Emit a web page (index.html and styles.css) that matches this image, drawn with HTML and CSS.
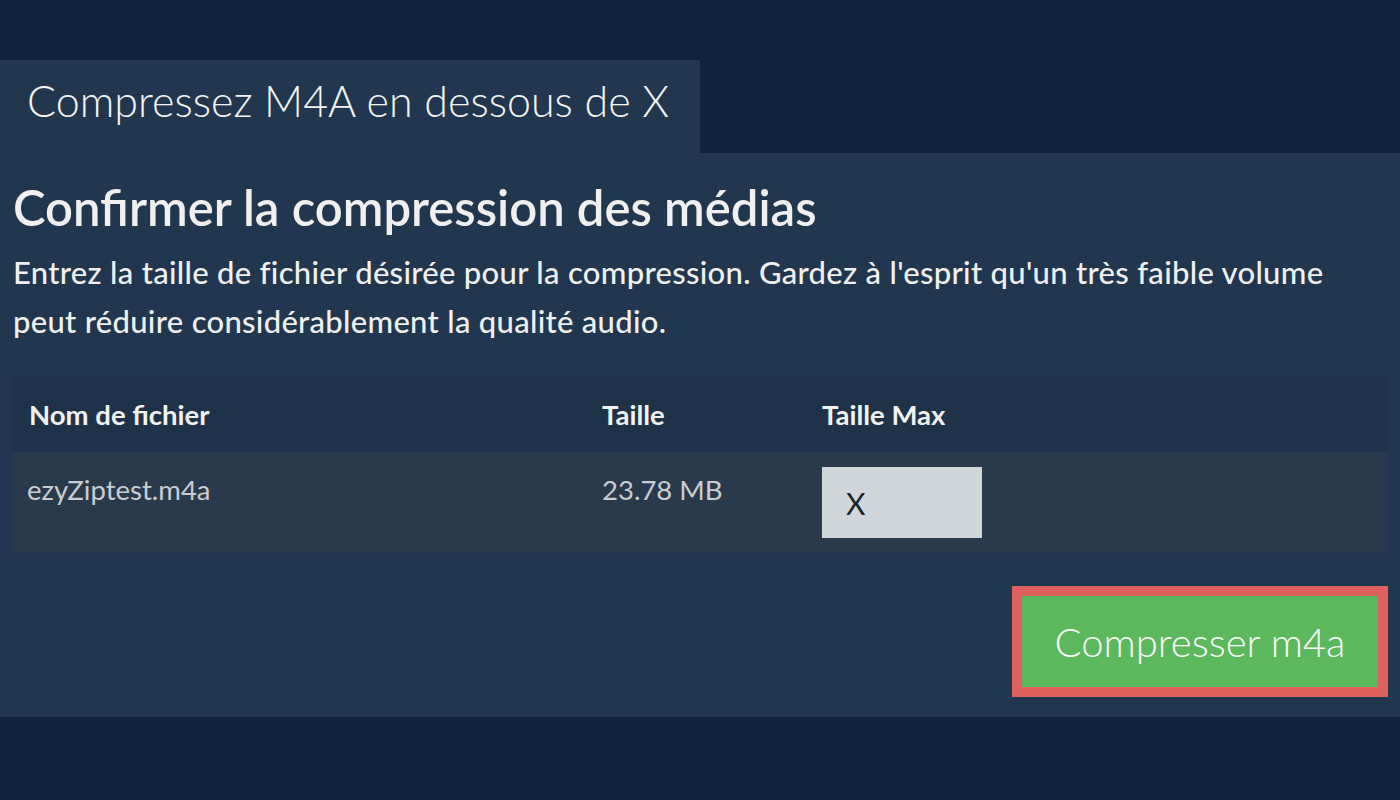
FILE: index.html
```html
<!DOCTYPE html>
<html lang="fr">
<head>
    <meta charset="UTF-8">
    <meta name="viewport" content="width=device-width, initial-scale=1.0">
    <title>Compressez M4A</title>
    <link rel="stylesheet" href="styles.css">
</head>
<body>
<div class="onglets">
    <div class="onglet">Compressez M4A en dessous de X</div>
</div>

<div class="panneau">
    <h2>Confirmer la compression des médias</h2>
    <p class="intro">Entrez la taille de fichier désirée pour la compression. Gardez à l'esprit qu'un très faible volume peut réduire considérablement la qualité audio.</p>

    <table class="fichiers">
        <thead>
            <tr>
                <th class="col-nom">Nom de fichier</th>
                <th class="col-taille">Taille</th>
                <th>Taille Max</th>
            </tr>
        </thead>
        <tbody>
            <tr>
                <td>ezyZiptest.m4a</td>
                <td>23.78 MB</td>
                <td><input type="text" class="taille-max" value="X"></td>
            </tr>
        </tbody>
    </table>

    <div class="actions">
        <button class="compresser">Compresser m4a</button>
    </div>
</div>
</body>
</html>
```

FILE: styles.css
```css
body { margin: 0; padding: 0; background: #10233a; color: #f0f0f0; font-family: Lato, "Open Sans", sans-serif; height: 800px; }
.onglets { padding-top: 60px; display: flex; }
.onglet { background: #21374f; width: 673px; height: 93px; padding-left: 27px; font-size: 43px; font-weight: 300; line-height: 82px; color: #f4f4f4; }
.panneau { background: #21374f; padding: 20px 12px 20px 12px; height: 524px; }
.panneau h2 { margin: 6px 0 0 1px; font-size: 49px; font-weight: 600; line-height: 56px; color: #f0f0f0; }
.intro { margin: 13px 0 0 1px; font-size: 31px; letter-spacing: 0.3px; line-height: 49px; font-weight: 500; color: #f0f0f0; }
.fichiers { width: 100%; border-collapse: collapse; margin-top: 31px; }
.fichiers th { background: #1e3349; text-align: left; font-size: 27.5px; font-weight: 700; height: 75px; padding: 0 17px; color: #f2f2f2; }
.fichiers td { background: #2a3a4d; height: 101px; padding: 0 17px; vertical-align: top; font-size: 27.5px; color: #c9ccd0; line-height: 76px; }
.fichiers td:first-child { padding-left: 15px; }
.col-nom { width: 539px; }
.col-taille { width: 186px; }
.taille-max { margin-top: 15px; width: 160px; height: 71px; box-sizing: border-box; border: none; background: #d1d6db; padding: 0 24px; font-family: Lato, sans-serif; font-size: 30px; color: #1c2530; vertical-align: top; }
.actions { display: flex; justify-content: flex-end; margin-top: 33px; }
.compresser { background: #5cb85c; border: 10px solid #df605d; width: 376px; height: 111px; color: #fff; font-family: Lato, sans-serif; font-size: 40px; font-weight: 300; cursor: pointer; }
```
